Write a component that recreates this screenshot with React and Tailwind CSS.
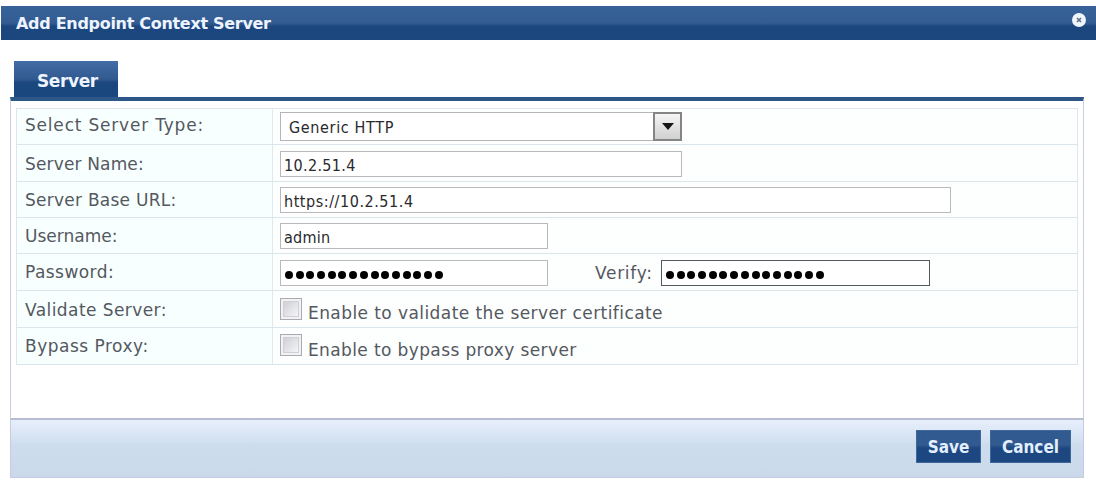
import React from "react";

const Row = ({ label, height, labelPad = "pt-0.5", tracking = "", children }) => (
  <div className={`flex border-b border-[#dae5ec] ${height}`}>
    <div
      className={`flex w-[256px] shrink-0 items-center border-r border-[#dfe9f0] bg-[#f8ffff] pl-2 ${labelPad}`}
    >
      <span className={`whitespace-nowrap text-[17px] text-[#545860] ${tracking}`}>
        {label}
      </span>
    </div>
    <div className="flex flex-1 items-start bg-[#fdfefe] pl-[7px]">{children}</div>
  </div>
);

const TextField = ({ value, width, tracking = "", border = "border-[#b9b9bd]" }) => (
  <div
    className={`flex h-[26px] shrink-0 items-center border bg-white pl-[3px] pt-[3px] ${border} ${width}`}
  >
    <span
      className={`whitespace-nowrap font-['DejaVu_Sans_Condensed','DejaVu_Sans',sans-serif] text-[16px] font-stretch-condensed text-[#29292d] ${tracking}`}
    >
      {value}
    </span>
  </div>
);

const PasswordField = ({ width, border = "border-[#b9b9bd]" }) => (
  <div
    className={`flex h-[26px] shrink-0 items-center gap-[2.7px] border bg-white pl-1 pt-1 ${border} ${width}`}
  >
    {Array.from({ length: 15 }, (_, i) => (
      <span key={i} className="h-2 w-2 shrink-0 rounded-full bg-black" />
    ))}
  </div>
);

const CheckOption = ({ label, pad, gap, tracking }) => (
  <label className={`flex items-start ${pad}`}>
    <span className="flex h-[22px] w-[22px] border border-[#a9abb1] bg-[#f2f2f4] p-0.5">
      <span className="flex-1 border border-[#cfcfd5] bg-linear-to-br from-[#cfd0d7] to-[#f5f5f6]" />
    </span>
    <span
      className={`ml-1.5 whitespace-nowrap text-[17px] leading-[20px] text-[#545860] ${gap} ${tracking}`}
    >
      {label}
    </span>
  </label>
);

const FooterButton = ({ children, width }) => (
  <button
    className={`flex h-[33px] items-center justify-center border border-[#3d689c] bg-linear-to-b from-[#315a91] from-45% to-[#1c4780] to-55% pt-0.5 font-['DejaVu_Sans_Condensed','DejaVu_Sans',sans-serif] text-[17px] font-bold font-stretch-condensed text-[#e3efff] ${width}`}
  >
    {children}
  </button>
);

export default function App() {
  return (
    <div className="h-[482px] w-[1096px] overflow-hidden bg-white pl-px pt-[6px] font-['DejaVu_Sans',sans-serif]">
      {/* Title bar */}
      <div className="flex h-[34px] items-center justify-between bg-linear-to-b from-[#37639a] via-[#335c91] via-50% to-[#1b467e] to-60% pl-[15px] pr-[10px]">
        <h1 className="whitespace-nowrap pt-0.5 text-[16px] font-bold tracking-[-0.3px] text-[#edf4ff]">
          Add Endpoint Context Server
        </h1>
        <svg className="mb-1.5 h-[14px] w-[14px]" viewBox="0 0 14 14">
          <circle cx="7" cy="7" r="7" fill="#f0f4fb" />
          <path d="M5 5l4 4M9 5l-4 4" stroke="#657183" strokeWidth="1.7" />
        </svg>
      </div>

      <div className="ml-[9px] mt-[21px] w-[1074px]">
        <div className="ml-1 flex h-9 w-[104px] items-center bg-linear-to-b from-[#416da5] via-[#315a90] via-50% to-[#1b477f] to-60% pl-[23px] pt-1.5">
          <span className="text-[17px] font-bold tracking-[-0.4px] text-[#edf4ff]">Server</span>
        </div>

        <div className="h-[321px] border-x border-t-4 border-x-[#c8cfdf] border-t-[#2c5787] px-[5px] pt-[7px]">
          <div className="border-x border-t border-[#dfe5ec]">
            <Row label="Select Server Type:" height="h-[36px]" labelPad="pb-0.5" tracking="tracking-[0.8px]">
              <div className="mt-[3px] flex h-[29px] w-[402px] border border-[#b4b4b9] bg-white">
                <span className="flex-1 whitespace-nowrap pl-2 pt-[3px] font-['DejaVu_Sans_Condensed','DejaVu_Sans',sans-serif] text-[16px] font-stretch-condensed tracking-[0.65px] text-[#29292d]">
                  Generic HTTP
                </span>
                <span className="-my-px -mr-px flex w-[29px] items-center justify-center border-2 border-[#858588] bg-linear-to-b from-[#f5f5f5] to-[#d0d0d1]">
                  <svg className="h-[7px] w-3" viewBox="0 0 12 7">
                    <path d="M0 0h12L6 7z" fill="#17171a" />
                  </svg>
                </span>
              </div>
            </Row>
            <Row label="Server Name:" height="h-[37px]" labelPad="pt-[3px]" tracking="tracking-[0.15px]">
              <div className="pt-1.5">
                <TextField value="10.2.51.4" width="w-[402px]" tracking="tracking-[0.35px]" />
              </div>
            </Row>
            <Row label="Server Base URL:" height="h-[36px]" tracking="tracking-[0.25px]">
              <div className="pt-[5px]">
                <TextField value="https://10.2.51.4" width="w-[671px]" tracking="tracking-[0.55px]" />
              </div>
            </Row>
            <Row label="Username:" height="h-[36px]">
              <div className="pt-[5px]">
                <TextField value="admin" width="w-[268px]" tracking="tracking-[0.25px]" />
              </div>
            </Row>
            <Row label="Password:" height="h-[37px]" tracking="tracking-[0.45px]">
              <div className="flex items-center pt-[5px]">
                <PasswordField width="w-[268px]" />
                <span className="ml-[47px] w-[66px] whitespace-nowrap pt-0.5 text-[17px] tracking-[0.7px] text-[#545860]">
                  Verify:
                </span>
                <PasswordField width="w-[269px]" border="border-[#55585e]" />
              </div>
            </Row>
            <Row label="Validate Server:" height="h-[37px]" labelPad="pt-[3px]" tracking="tracking-[0.42px]">
              <CheckOption
                label="Enable to validate the server certificate"
                pad="pt-[7px]"
                gap="mt-[5px]"
                tracking="tracking-[0.42px]"
              />
            </Row>
            <Row label="Bypass Proxy:" height="h-[37px]" tracking="tracking-[0.5px]">
              <CheckOption
                label="Enable to bypass proxy server"
                pad="pt-1.5"
                gap="mt-1.5"
                tracking="tracking-[0.38px]"
              />
            </Row>
          </div>
        </div>

        {/* Footer actions */}
        <div className="flex h-[60px] justify-end gap-[9px] border border-t-2 border-[#c7cbe2] border-t-[#b7bdd0] bg-linear-to-b from-[#e8effc] via-[#cddded] via-45% to-[#c9d9e9] pr-3 pt-2.5">
          <FooterButton width="w-[65px]">Save</FooterButton>
          <FooterButton width="w-[81px]">Cancel</FooterButton>
        </div>
      </div>
    </div>
  );
}
